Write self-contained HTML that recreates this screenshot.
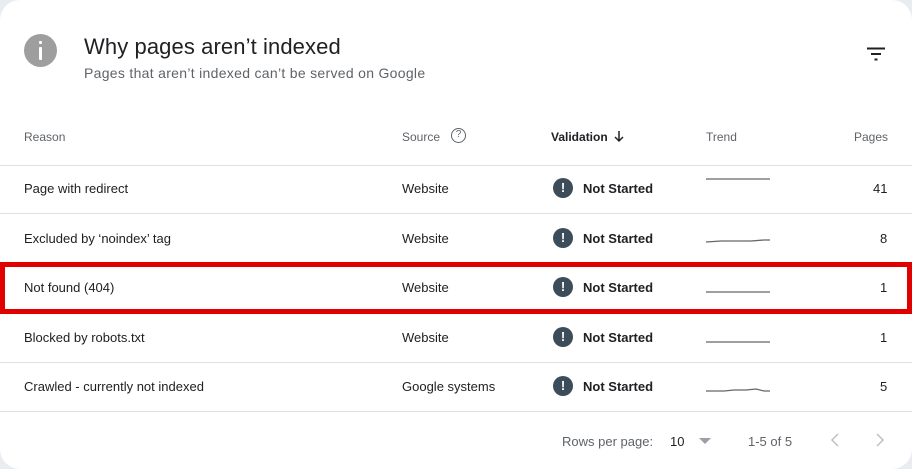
<!DOCTYPE html>
<html><head><style>
*{margin:0;padding:0;box-sizing:border-box}
body{width:912px;height:469px;background:#e9edf2;font-family:"Liberation Sans",Arial,sans-serif;position:relative;overflow:hidden}
.card{position:absolute;left:0;top:0;width:912px;height:469px;background:#fff;border-radius:20px}
.a{position:absolute;white-space:nowrap}
.h{font-size:12px;color:#5f6368;top:130px}
.line{position:absolute;left:0;width:912px;height:1px;background:#e0e0e0}
.r{font-size:13px;color:#202124}
.ic{position:absolute;width:20px;height:20px;border-radius:50%;background:#3c4c58;color:#fff;font-size:13px;font-weight:bold;text-align:center;line-height:20px}
.ns{font-size:13px;color:#202124;font-weight:bold}
</style></head><body>
<div class="card"></div>
<div class="a" style="left:24px;top:34px;width:33px;height:33px;border-radius:50%;background:#9e9e9e"></div>
<div class="a" style="left:39px;top:41px;width:3px;height:3px;background:#fff;border-radius:1px"></div>
<div class="a" style="left:39px;top:47px;width:3px;height:13px;background:#fff;border-radius:1px"></div>
<div class="a" style="left:84px;top:34px;font-size:22px;color:#202124;letter-spacing:0.1px">Why pages aren’t indexed</div>
<div class="a" style="left:84px;top:65px;font-size:14px;color:#5f6368;letter-spacing:0.3px">Pages that aren’t indexed can’t be served on Google</div>
<svg class="a" style="left:866px;top:47px" width="20" height="14"><path d="M1 1.5h18M5 7h10M8.5 12.5h3" stroke="#202124" stroke-width="2"/></svg>
<div class="a h" style="left:24px">Reason</div>
<div class="a h" style="left:402px">Source</div>
<div class="a" style="left:451px;top:128px;width:15px;height:15px;border:1.5px solid #5f6368;border-radius:50%;font-size:10px;color:#5f6368;text-align:center;line-height:12px">?</div>
<div class="a h" style="left:551px;color:#202124;font-weight:bold">Validation</div>
<svg class="a" style="left:613px;top:130px" width="12" height="13"><path d="M6 1v10M2 7l4 4 4-4" stroke="#202124" stroke-width="1.5" fill="none"/></svg>
<div class="a h" style="left:706px">Trend</div>
<div class="a h" style="left:854px">Pages</div>
<div class="line" style="top:165px"></div>
<div class="line" style="top:213px"></div>
<div class="line" style="top:362px"></div>
<div class="line" style="top:411px"></div>

<div class="a r" style="left:24px;top:181px">Page with redirect</div>
<div class="a r" style="left:402px;top:181px">Website</div>
<div class="ic" style="left:553px;top:178px">!</div><div class="a ns" style="left:583px;top:181px">Not Started</div>
<svg class="a" style="left:706px;top:176px" width="66" height="6"><path d="M0 3H64" stroke="#666" stroke-width="1.3"/></svg>
<div class="a r" style="left:873px;top:181px">41</div>

<div class="a r" style="left:24px;top:231px">Excluded by ‘noindex’ tag</div>
<div class="a r" style="left:402px;top:231px">Website</div>
<div class="ic" style="left:553px;top:228px">!</div><div class="a ns" style="left:583px;top:231px">Not Started</div>
<svg class="a" style="left:706px;top:234px" width="66" height="10"><path d="M0 8L15 7H45L58 6H64" stroke="#666" stroke-width="1.3" fill="none"/></svg>
<div class="a r" style="left:880px;top:231px">8</div>

<div class="a r" style="left:24px;top:280px">Not found (404)</div>
<div class="a r" style="left:402px;top:280px">Website</div>
<div class="ic" style="left:553px;top:277px">!</div><div class="a ns" style="left:583px;top:280px">Not Started</div>
<svg class="a" style="left:706px;top:289px" width="66" height="6"><path d="M0 3H64" stroke="#666" stroke-width="1.3"/></svg>
<div class="a r" style="left:880px;top:280px">1</div>
<div class="a" style="left:0;top:262px;width:912px;height:52px;border:5px solid #e00000"></div>

<div class="a r" style="left:24px;top:330px">Blocked by robots.txt</div>
<div class="a r" style="left:402px;top:330px">Website</div>
<div class="ic" style="left:553px;top:327px">!</div><div class="a ns" style="left:583px;top:330px">Not Started</div>
<svg class="a" style="left:706px;top:339px" width="66" height="6"><path d="M0 3H64" stroke="#666" stroke-width="1.3"/></svg>
<div class="a r" style="left:880px;top:330px">1</div>

<div class="a r" style="left:24px;top:379px">Crawled - currently not indexed</div>
<div class="a r" style="left:402px;top:379px">Google systems</div>
<div class="ic" style="left:553px;top:376px">!</div><div class="a ns" style="left:583px;top:379px">Not Started</div>
<svg class="a" style="left:706px;top:384px" width="66" height="10"><path d="M0 7H18L28 6H40L50 5L58 7H64" stroke="#666" stroke-width="1.3" fill="none"/></svg>
<div class="a r" style="left:880px;top:379px">5</div>

<div class="a" style="left:562px;top:434px;font-size:13px;color:#5f6368">Rows per page:</div>
<div class="a" style="left:670px;top:434px;font-size:13px;color:#202124">10</div>
<svg class="a" style="left:699px;top:438px" width="12" height="7"><path d="M0 0h12L6 6z" fill="#9aa0a6"/></svg>
<div class="a" style="left:748px;top:434px;font-size:13px;color:#5f6368">1-5 of 5</div>
<svg class="a" style="left:830px;top:433px" width="10" height="14"><path d="M8 1L2 7l6 6" stroke="#bdc1c6" stroke-width="1.5" fill="none"/></svg>
<svg class="a" style="left:875px;top:433px" width="10" height="14"><path d="M2 1l6 6-6 6" stroke="#bdc1c6" stroke-width="1.5" fill="none"/></svg>
</body></html>
